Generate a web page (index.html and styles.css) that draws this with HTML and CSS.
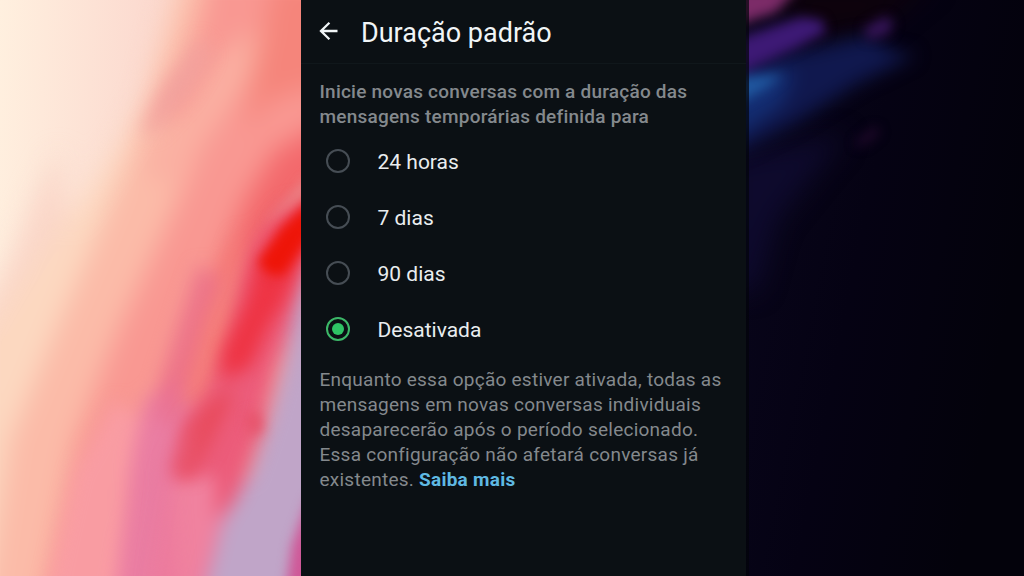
FILE: index.html
```
<!DOCTYPE html>
<html lang="pt-BR">
<head>
    <meta charset="UTF-8">
    <meta name="viewport" content="width=device-width, initial-scale=1.0">
    <title>Duração padrão</title>
    <link rel="stylesheet" href="styles.css">
</head>
<body>

<!-- fundo claro -->
<svg class="art art-left" viewBox="0 0 301 576" preserveAspectRatio="none" aria-hidden="true">
    <defs>
        <linearGradient id="cream" x1="0" y1="0" x2="1" y2="0.1">
            <stop offset="0" stop-color="#fff0df"/>
            <stop offset="0.6" stop-color="#fbd5cc"/>
        </linearGradient>
    </defs>
    <rect width="301" height="576" fill="url(#cream)"/>
    <g class="blur-big">
        <path d="M60 150L35 200L10 260L-30 330V420L70 250Z" fill="#fad6c8"/>
        <path d="M90 190L50 245L-30 360V620H340V-30H180L145 100L110 160Z" fill="#fcd8c0"/>
        <path d="M188 -30L150 100L130 155L95 240L60 320L10 440L-20 640H340V-30Z" fill="#fbbba8"/>
        <path d="M212 -30L190 60L150 125L190 110L200 150L160 240L118 330L75 440L35 640H340V-30Z" fill="#f99892"/>
        <path d="M225 50L290 10L255 70L200 150L170 190L140 165L190 100Z" fill="#fab0a2"/>
        <path d="M275 -20H340V80L270 100L245 130L255 60Z" fill="#f5857b"/>
        <path d="M330 120L275 150L245 200L215 280L190 350L165 420L190 430L240 300L330 190Z" fill="#f3696c"/>
    </g>
    <g class="blur-mid">
        <path d="M200 38L165 85L140 135L155 132L188 95L210 55Z" fill="#f0a09e" opacity=".8"/>
        <path d="M145 400L132 450L124 520L112 600H240L250 400L170 380Z" fill="#ea7da2"/>
        <path d="M75 470L45 600H116L126 490L140 420L115 400Z" fill="#f99eaa" opacity=".7"/>
        <path d="M198 265L160 380L158 425L176 420L200 360L222 280Z" fill="#ea6f8b" opacity=".75"/>
        <path d="M240 230L205 320L182 405L200 405L245 290Z" fill="#f5807b"/>
        <path d="M320 200L285 205L255 240L240 280L228 340L205 390L182 435L175 480L215 520L235 500L258 440L274 370L310 280Z" fill="#ec5c7a"/>
        <path d="M312 240L296 300L285 360L267 425L250 475L222 525L200 610H340V240Z" fill="#c0a5c8"/>
        <path d="M170 480L215 475L215 530L190 600H150Z" fill="#f0829f"/>
    </g>
    <g class="blur-mid">
        <path d="M315 190L280 225L254 265L246 300L222 350L221 380L250 368L270 325L286 300L310 235Z" fill="#ee3444"/>
        <path d="M215 400L232 385L228 405L207 448L188 478L171 474L188 420Z" fill="#e84858"/>
        <path d="M208 400L190 460L172 480L180 600H150L165 470Z" fill="#e9709a" opacity=".4"/>
    </g>
    <g class="blur-small">
        <path d="M245 415L260 410L264 430L250 438Z" fill="#e64f67" opacity=".8"/>
        <path d="M310 174L275 212L264 225L285 210L310 192Z" fill="#e98488"/>
        <path d="M318 194L282 228L258 262L268 274L283 276L318 225Z" fill="#ee1508"/>
        <path d="M308 500L292 545L286 590H320V490Z" fill="#cf5797"/>
    </g>
</svg>

<!-- tela do aplicativo -->
<main class="screen">
    <header class="topbar">
        <svg class="back" viewBox="0 0 20 20" aria-hidden="true">
            <path d="M18.5 10H2M10.4 1.8L2 10L10.4 18.2"/>
        </svg>
        <h1>Duração padrão</h1>
    </header>

    <p class="intro">Inicie novas conversas com a duração das<br>mensagens temporárias definida para</p>

    <ul class="options">
        <li><span class="radio"></span><span class="label">24 horas</span></li>
        <li><span class="radio"></span><span class="label">7 dias</span></li>
        <li><span class="radio"></span><span class="label">90 dias</span></li>
        <li><span class="radio checked"></span><span class="label">Desativada</span></li>
    </ul>

    <p class="note">Enquanto essa opção estiver ativada, todas as<br>mensagens em novas conversas individuais<br>desaparecerão após o período selecionado.<br>Essa configuração não afetará conversas já<br>existentes. <a class="more">Saiba mais</a></p>
</main>

<!-- fundo escuro -->
<svg class="art art-right" viewBox="0 0 278 576" preserveAspectRatio="none" aria-hidden="true">
    <defs>
        <linearGradient id="night" x1="0" y1="0" x2="1" y2="0.4">
            <stop offset="0" stop-color="#09061c"/>
            <stop offset="0.5" stop-color="#050213"/>
            <stop offset="1" stop-color="#03020b"/>
        </linearGradient>
    </defs>
    <rect width="278" height="576" fill="url(#night)"/>
    <g class="blur-big">
        <path d="M20 -20H190L130 30L60 40Z" fill="#0d020c"/>
        <path d="M-20 160L100 135L70 170L30 220L10 290H-20Z" fill="#0e0a2d"/>
    </g>
    <g class="blur-mid">
        <path d="M-15 66L60 50L120 36L150 52L170 55L110 84L50 122L-15 155Z" fill="#10184e"/>
        <path d="M-15 80L50 70L35 105L-15 140Z" fill="#132d72"/>
    </g>
    <g class="blur-small">
        <path d="M-12 40L55 17L76 20L80 32L50 48L-12 76Z" fill="#3d1975"/>
        <path d="M-12 78L38 74L20 88L-12 106Z" fill="#2058a0"/>
        <path d="M118 28L140 16L148 24L142 34L122 40Z" fill="#351458"/>
        <path d="M108 144L128 127L134 132L116 146Z" fill="#25092f"/>
        <path d="M-12 -12H52L30 12L-12 26Z" fill="#7c2b68"/>
    </g>
    <rect width="3" height="576" fill="#03040a" opacity=".7"/>
</svg>

</body>
</html>
```
FILE: styles.css
```
/* geral */
body {
    margin: 0;
    display: flex;
    width: 1024px;
    height: 576px;
    overflow: hidden;
    background: #0b1014;
    font-family: Roboto, sans-serif;
}

.art {
    display: block;
    height: 576px;
    flex: none;
    overflow: hidden;
}

.art-left {
    width: 301px;
}

.art-right {
    width: 278px;
}

.blur-big {
    filter: blur(13px);
}

.blur-mid {
    filter: blur(9px);
}

.blur-small {
    filter: blur(6px);
}

/* tela */
.screen {
    width: 445px;
    flex: none;
    background: #0b1014;
    color: #e9edef;
}

.topbar {
    display: flex;
    align-items: center;
    height: 64px;
    padding-left: 18px;
    box-sizing: border-box;
    border-bottom: 1px solid #10171b;
}

.back {
    width: 20px;
    height: 20px;
    margin-bottom: 1px;
    fill: none;
    stroke: #f1f5f7;
    stroke-width: 2.3;
}

h1 {
    margin: 3px 0 0 22px;
    font-size: 27px;
    font-weight: 400;
    color: #f1f5f7;
}

p {
    margin: 0;
    padding-left: 18.5px;
    color: #84898d;
    white-space: nowrap;
}

.intro {
    padding-top: 15px;
    font-size: 19px;
    font-weight: 500;
    line-height: 25px;
    letter-spacing: 0.22px;
}

/* opções */
.options {
    list-style: none;
    margin: 4px 0 0;
    padding: 0 0 0 25px;
}

.options li {
    display: flex;
    align-items: center;
    gap: 27.5px;
    height: 56px;
    font-size: 21px;
}

.label {
    padding-top: 2px;
}

.radio {
    display: flex;
    width: 24px;
    height: 24px;
    box-sizing: border-box;
    border: 2px solid #464d54;
    border-radius: 50%;
}

.radio.checked {
    border-color: #3cb868;
}

.radio.checked::after {
    content: "";
    width: 12px;
    height: 12px;
    margin: auto;
    border-radius: 50%;
    background: #2ec465;
}

.note {
    padding-top: 10px;
    font-size: 19px;
    line-height: 25px;
    letter-spacing: 0.25px;
}

.more {
    color: #5fb9e3;
    font-weight: 700;
}
```
